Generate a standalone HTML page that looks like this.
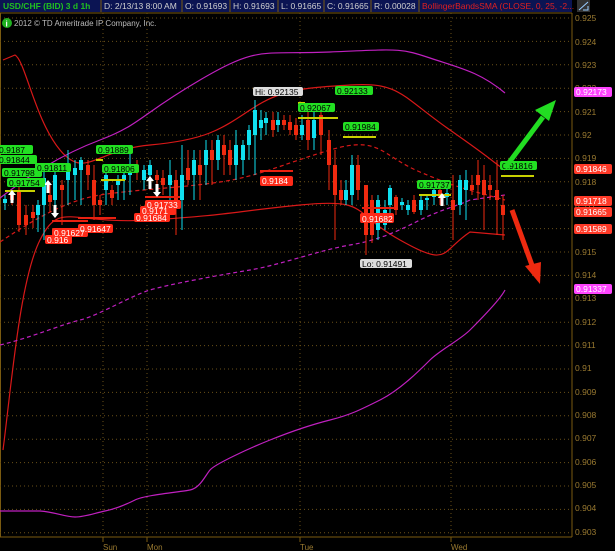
<!DOCTYPE html><html><head><style>
body{margin:0;background:#000;width:615px;height:551px;overflow:hidden;font-family:"Liberation Sans",sans-serif}
svg{position:absolute;left:0;top:0}
</style></head><body>
<svg width="615" height="551" viewBox="0 0 615 551" font-family="Liberation Sans, sans-serif">
<rect width="615" height="551" fill="#000"/>
<!-- header -->
<rect x="0" y="0" width="572" height="12" fill="#0b1453"/>
<g stroke="#7a5a10" stroke-width="1">
<line x1="101" y1="0" x2="101" y2="12"/><line x1="182" y1="0" x2="182" y2="12"/><line x1="230" y1="0" x2="230" y2="12"/><line x1="278" y1="0" x2="278" y2="12"/><line x1="324" y1="0" x2="324" y2="12"/><line x1="371" y1="0" x2="371" y2="12"/><line x1="419" y1="0" x2="419" y2="12"/>
</g>
<g font-size="8.5" fill="#d0d0d0">
<text x="3" y="9" fill="#20c020" font-weight="bold">USD/CHF (BID) 3 d 1h</text>
<text x="104" y="9">D: 2/13/13 8:00 AM</text>
<text x="185" y="9">O: 0.91693</text>
<text x="233" y="9">H: 0.91693</text>
<text x="281" y="9">L: 0.91665</text>
<text x="327" y="9">C: 0.91665</text>
<text x="374" y="9">R: 0.00028</text>
<text x="422" y="9" fill="#e02020">BollingerBandsSMA (CLOSE, 0, 25, -2...</text>
</g>
<rect x="577" y="0" width="13" height="12" fill="#333"/><path d="M579 10 L588 2 M583 10 L588 10 L588 6" stroke="#9cf" fill="none"/>
<line x1="0" y1="13" x2="572" y2="13" stroke="#7a5a10"/>
<line x1="572" y1="13" x2="572" y2="537" stroke="#7a5a10"/>
<line x1="0" y1="537" x2="572" y2="537" stroke="#7a5a10"/>
<line x1="0.5" y1="13" x2="0.5" y2="537" stroke="#7a5a10"/>
<circle cx="7" cy="23" r="5" fill="#20b020"/><text x="5.5" y="26.5" font-size="8" fill="#fff" font-weight="bold">i</text>
<text x="14" y="26" font-size="8" fill="#bbb">2012 © TD Ameritrade IP Company, Inc.</text>
<!-- grid -->
<g stroke="#6a5018" stroke-dasharray="1,3" stroke-width="1" id="grid"></g>
<g stroke="#6a5018" stroke-dasharray="1,3">
<line x1="103" y1="13" x2="103" y2="537"/><line x1="147" y1="13" x2="147" y2="537"/><line x1="300" y1="13" x2="300" y2="537"/><line x1="451" y1="13" x2="451" y2="537"/>
</g>
<g stroke="#7a5a10"><line x1="103" y1="537" x2="103" y2="542"/><line x1="147" y1="537" x2="147" y2="542"/><line x1="300" y1="537" x2="300" y2="542"/><line x1="451" y1="537" x2="451" y2="542"/></g>
<g font-size="8" fill="#9a7a30"><text x="103" y="550">Sun</text><text x="147" y="550">Mon</text><text x="300" y="550">Tue</text><text x="451" y="550">Wed</text></g>
<g font-size="8.5" fill="#9a7a30" id="axis">
<text x="575" y="21">0.925</text><text x="575" y="45">0.924</text><text x="575" y="68">0.923</text><text x="575" y="91">0.922</text><text x="575" y="115">0.921</text><text x="575" y="138">0.92</text><text x="575" y="161">0.919</text><text x="575" y="185">0.918</text><text x="575" y="208">0.917</text><text x="575" y="231">0.916</text><text x="575" y="255">0.915</text><text x="575" y="278">0.914</text><text x="575" y="301">0.913</text><text x="575" y="325">0.912</text><text x="575" y="348">0.911</text><text x="575" y="371">0.91</text><text x="575" y="395">0.909</text><text x="575" y="418">0.908</text><text x="575" y="441">0.907</text><text x="575" y="465">0.906</text><text x="575" y="488">0.905</text><text x="575" y="511">0.904</text><text x="575" y="535">0.903</text>
</g>
<!-- bands -->
<g fill="none" stroke-width="1.2">
<path d="M3 60 L15 55 C25 60 35 120 60 150 S95 150 150 145 S220 130 250 110 S300 88 350 85 S400 95 450 130 S490 160 505 170" stroke="#d81818"/>
<path d="M3 450 C12 380 20 280 40 240 S70 225 150 220 S230 212 300 205 S350 212 400 240 S440 252 470 232 L505 235" stroke="#d81818"/>
<path d="M0 242 C40 215 70 200 100 195 S180 188 220 182 S280 165 330 150 S380 155 420 172 S470 190 505 200" stroke="#d81818" stroke-dasharray="4,3"/>
<path d="M0 198 C30 175 60 155 100 140 S140 115 200 80 S260 55 330 52 S400 48 430 58 S480 72 505 93" stroke="#c020c0"/>
<path d="M0 511 L40 511 C55 512 65 517 75 517 S95 513 105 511 S125 505 135 500 S180 492 190 490 S205 476 210 470 S250 448 270 440 S310 425 330 420 S360 410 380 400 S420 370 430 360 S460 340 470 330 S500 300 505 290" stroke="#c020c0"/>
<path d="M0 345 C30 338 60 325 80 320 S130 296 150 290 S220 275 250 270 S320 250 350 245 S400 230 420 220 S460 205 470 200 L505 195" stroke="#c020c0" stroke-dasharray="4,3"/>
</g>
<g id="candles"></g>
<!-- yellow/red level lines -->
<g stroke-width="2">
<line x1="5" y1="191" x2="35" y2="191" stroke="#c8d000"/><line x1="96" y1="160" x2="103" y2="160" stroke="#c8d000"/><line x1="101" y1="180" x2="125" y2="180" stroke="#c8d000"/>
<line x1="298" y1="103" x2="305" y2="103" stroke="#c8d000"/><line x1="298" y1="118" x2="338" y2="118" stroke="#c8d000"/><line x1="343" y1="137" x2="376" y2="137" stroke="#c8d000"/><line x1="419" y1="195" x2="451" y2="195" stroke="#c8d000"/><line x1="501" y1="176" x2="534" y2="176" stroke="#c8d000"/>
<line x1="260" y1="171" x2="293" y2="171" stroke="#e82010"/><line x1="362" y1="208" x2="395" y2="208" stroke="#e82010"/><line x1="78" y1="218" x2="116" y2="218" stroke="#e82010"/><line x1="52" y1="221" x2="88" y2="221" stroke="#e82010"/><line x1="145" y1="197" x2="180" y2="197" stroke="#e82010"/>
</g>
<!-- white arrows -->
<g fill="#fff">
<path d="M12 190 l-4 5 h2.5 v8 h3 v-8 h2.5z"/><path d="M48 180 l-4 5 h2.5 v8 h3 v-8 h2.5z"/><path d="M150 176 l-4 5 h2.5 v8 h3 v-8 h2.5z"/><path d="M442 193 l-4 5 h2.5 v8 h3 v-8 h2.5z"/>
<path d="M55 218 l-4 -5 h2.5 v-8 h3 v8 h2.5z"/><path d="M157 197 l-4 -5 h2.5 v-8 h3 v8 h2.5z"/>
</g>
<!-- labels -->
<g font-size="8.5">
<g fill="#22e022"><rect x="-3" y="145" width="36" height="9" rx="2"/><rect x="-3" y="155" width="40" height="9" rx="2"/><rect x="2" y="168" width="40" height="9" rx="2"/><rect x="35" y="163" width="36" height="9" rx="2"/><rect x="7" y="178" width="38" height="9" rx="2"/><rect x="96" y="145" width="37" height="9" rx="2"/><rect x="102" y="164" width="37" height="9" rx="2"/><rect x="298" y="103" width="37" height="9" rx="2"/><rect x="335" y="86" width="38" height="9" rx="2"/><rect x="343" y="122" width="36" height="9" rx="2"/><rect x="417" y="180" width="34" height="9" rx="2"/><rect x="500" y="161" width="37" height="9" rx="2"/></g>
<g fill="#000"><text x="-1" y="153">0.9187</text><text x="-1" y="163">0.91844</text><text x="4" y="176">0.91798</text><text x="37" y="171">0.91811</text><text x="9" y="186">0.91754</text><text x="98" y="153">0.91889</text><text x="104" y="172">0.91806</text><text x="300" y="111">0.92067</text><text x="337" y="94">0.92133</text><text x="345" y="130">0.91984</text><text x="419" y="188">0.91737</text><text x="502" y="169">0.91816</text></g>
<g fill="#ff2a18"><rect x="145" y="200" width="36" height="9" rx="2"/><rect x="140" y="206" width="36" height="9" rx="2"/><rect x="134" y="213" width="36" height="9" rx="2"/><rect x="78" y="224" width="35" height="9" rx="2"/><rect x="52" y="228" width="36" height="9" rx="2"/><rect x="45" y="235" width="27" height="9" rx="2"/><rect x="260" y="176" width="33" height="10" rx="2"/><rect x="360" y="213" width="34" height="10" rx="2"/></g>
<g fill="#fff"><text x="147" y="208">0.91733</text><text x="142" y="214">0.9171</text><text x="136" y="221">0.91684</text><text x="80" y="232">0.91647</text><text x="54" y="236">0.91627</text><text x="47" y="243">0.916</text><text x="262" y="184">0.9184</text><text x="362" y="222">0.91682</text></g>
<rect x="253" y="87" width="50" height="9" rx="2" fill="#ddd"/><text x="255" y="95" fill="#000">Hi: 0.92135</text>
<rect x="360" y="259" width="52" height="9" rx="2" fill="#ddd"/><text x="362" y="267" fill="#000">Lo: 0.91491</text>
</g>
<!-- big arrows -->
<path d="M505 168 L543 117" stroke="#22dd22" stroke-width="5"/><path d="M556 100 L535 110 L549 121z" fill="#22dd22"/>
<path d="M512 210 L533 268" stroke="#ee2a10" stroke-width="5"/><path d="M540 284 L525 266 L541 262z" fill="#ee2a10"/>
<!-- right labels -->
<g font-size="8.5">
<rect x="574" y="87" width="38" height="10" rx="2" fill="#ff44ff"/><text x="576" y="95" fill="#fff">0.92173</text>
<rect x="574" y="164" width="38" height="10" rx="2" fill="#ff3a28"/><text x="576" y="172" fill="#fff">0.91846</text>
<rect x="574" y="196" width="38" height="10" rx="2" fill="#ff3a28"/><text x="576" y="204" fill="#fff">0.91718</text>
<rect x="574" y="207" width="38" height="10" rx="2" fill="#ff3a28"/><text x="576" y="215" fill="#fff">0.91665</text>
<rect x="574" y="224" width="38" height="10" rx="2" fill="#ff3a28"/><text x="576" y="232" fill="#fff">0.91589</text>
<rect x="574" y="284" width="38" height="10" rx="2" fill="#ff44ff"/><text x="576" y="292" fill="#fff">0.91337</text>
</g>
</svg>
<script>
var ns="http://www.w3.org/2000/svg";
var g=document.getElementById('grid');
for(var k=0;k<23;k++){var y=18+k*23.4;var l=document.createElementNS(ns,'line');l.setAttribute('x1',0);l.setAttribute('x2',572);l.setAttribute('y1',y);l.setAttribute('y2',y);g.appendChild(l);}
var d=[[5,203,199,195,210],[12,195,200,190,205],[19,190,225,185,232],[26,215,225,205,235],[33,212,218,205,228],[38,215,205,200,232],[44,205,178,170,240],[50,195,202,185,212],[55,200,175,172,215],[62,185,190,180,225],[68,180,165,150,205],[75,175,168,160,200],[81,170,160,157,205],[88,165,175,160,190],[94,180,205,165,220],[100,200,205,195,215],[106,190,175,170,205],[112,190,198,185,205],[118,185,180,175,200],[124,180,175,170,200],[130,175,165,150,195],[137,165,172,160,180],[144,180,170,165,190],[150,175,165,160,185],[157,175,180,170,190],[163,178,185,170,195],[170,185,175,160,210],[176,180,200,170,235],[182,200,175,145,230],[188,168,180,150,185],[194,175,160,150,200],[200,165,175,150,200],[206,165,150,140,185],[212,150,160,140,185],[218,160,140,135,170],[224,145,155,135,175],[230,150,165,140,175],[236,165,145,130,180],[243,160,145,140,175],[249,145,130,125,160],[255,135,110,100,175],[261,128,120,110,140],[266,123,118,112,135],[273,120,130,112,137],[278,125,120,112,132],[284,120,125,115,130],[290,122,130,115,135],[296,125,135,118,140],[302,135,125,115,140],[308,120,140,112,150],[314,138,120,112,150],[321,115,135,110,155],[329,140,165,130,190],[335,165,195,150,240],[341,190,200,180,205],[346,200,190,180,205],[352,195,165,155,205],[358,165,190,155,200],[366,185,235,185,255],[372,200,235,195,243],[378,230,200,195,240],[385,225,210,200,230],[390,205,188,185,215],[396,197,210,195,215],[402,205,202,198,210],[408,210,205,200,215],[414,200,212,195,214],[421,210,200,195,215],[427,200,198,195,210],[434,197,190,185,205],[440,190,198,188,205],[447,197,193,185,205],[453,200,210,175,240],[460,205,180,175,215],[466,190,180,170,220],[472,185,190,175,195],[478,175,185,160,200],[484,180,195,165,230],[490,185,190,175,200],[497,190,200,160,235],[503,205,215,195,240]];
var c=document.getElementById('candles');
d.forEach(function(a){var up=a[2]<a[1];var col=up?'#10e0f0':'#f02a10';
var w=document.createElementNS(ns,'line');w.setAttribute('x1',a[0]);w.setAttribute('x2',a[0]);w.setAttribute('y1',a[3]);w.setAttribute('y2',a[4]);w.setAttribute('stroke',col);c.appendChild(w);
var r=document.createElementNS(ns,'rect');var t=Math.min(a[1],a[2]);r.setAttribute('x',a[0]-2);r.setAttribute('y',t);r.setAttribute('width',4);r.setAttribute('height',Math.max(2,Math.abs(a[1]-a[2])));r.setAttribute('fill',col);c.appendChild(r);});
</script>
</body></html>
